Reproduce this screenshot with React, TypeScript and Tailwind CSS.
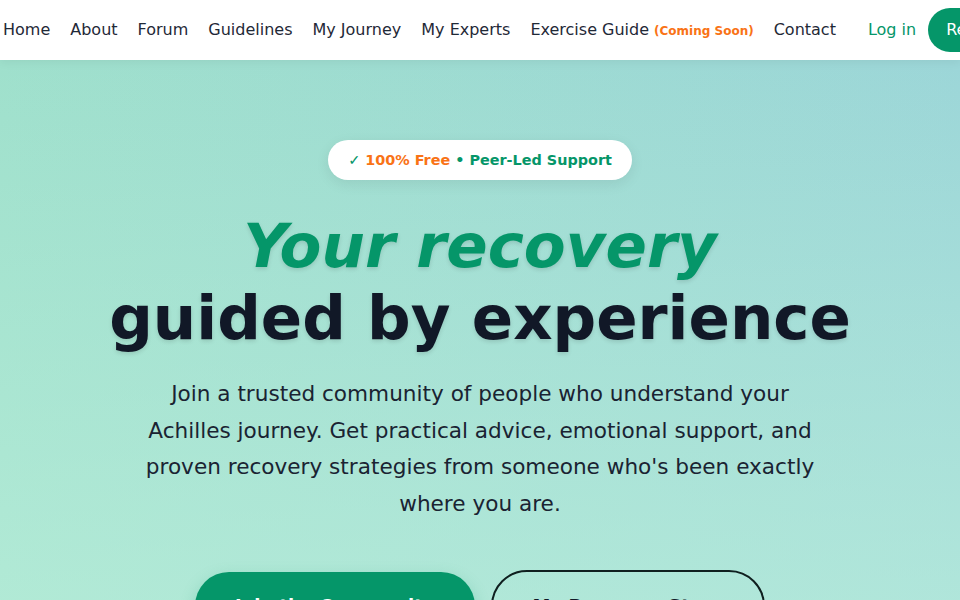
import React from 'react';

const navLinks = ['Home', 'About', 'Forum', 'Guidelines', 'My Journey', 'My Experts'];

export default function App() {
  return (
    <div className="min-h-screen font-['DejaVu_Sans',sans-serif] text-[#111827] overflow-hidden">
      {/* Header */}
      <header className="relative z-10 h-[60px] bg-white shadow-[0_2px_10px_rgba(0,0,0,0.06)] flex items-center pl-[3px] whitespace-nowrap overflow-hidden">
        <nav className="flex items-center gap-5 text-base text-[#1f2937]">
          {navLinks.map((link) => (
            <a key={link} href="#" className="hover:text-[#059669]">
              {link}
            </a>
          ))}
          <a href="#" className="flex items-center">
            Exercise Guide
            <span className="ml-[5px] mt-[2px] text-xs font-bold text-[#f97316]">(Coming Soon)</span>
          </a>
          <a href="#">Contact</a>
        </nav>
        <div className="ml-8 flex items-center gap-3 shrink-0">
          <a href="#" className="text-base text-[#059669]">
            Log in
          </a>
          <button className="h-11 px-[18px] rounded-full bg-[#059669] text-white text-base">
            Register
          </button>
        </div>
      </header>

      {/* Hero */}
      <section className="bg-[linear-gradient(180deg,rgba(189,240,220,0)_0px,rgba(189,240,220,0.6)_540px),linear-gradient(90deg,#9fe0cc,#9cd6d8)] pt-20 pb-24 px-6 flex flex-col items-center text-center">
        <div className="bg-white rounded-full px-5 py-2.5 text-[14.4px] leading-5 font-bold shadow-[0_4px_14px_rgba(0,0,0,0.08)]">
          <span className="text-[#059669]">✓ </span>
          <span className="text-[#f97316]">100% Free</span>
          <span className="text-[#059669]"> • Peer-Led Support</span>
        </div>

        <h1 className="mt-[30px] text-[61px] font-bold leading-[72px] [text-shadow:0_2px_4px_rgba(0,0,0,0.12)]">
          <span className="block italic text-[#059669]">Your recovery</span>
          <span className="block text-[#111827]">guided by experience</span>
        </h1>

        <p className="mt-[22px] max-w-2xl text-[21.6px] leading-[36.7px] text-[#1a2332]">
          Join a trusted community of people who understand your Achilles journey. Get practical
          advice, emotional support, and proven recovery strategies from someone who's been exactly
          where you are.
        </p>

        <div className="mt-[47px] flex items-center gap-4">
          <button className="px-10 py-5 rounded-full bg-[#059669] text-white text-lg font-bold shadow-[0_6px_16px_rgba(5,150,105,0.25)]">
            Join the Community
          </button>
          <button className="px-10 py-5 rounded-full border-2 border-[#0f1f1f] text-[#111827] text-lg font-bold">
            My Recovery Story
          </button>
        </div>
      </section>
    </div>
  );
}
